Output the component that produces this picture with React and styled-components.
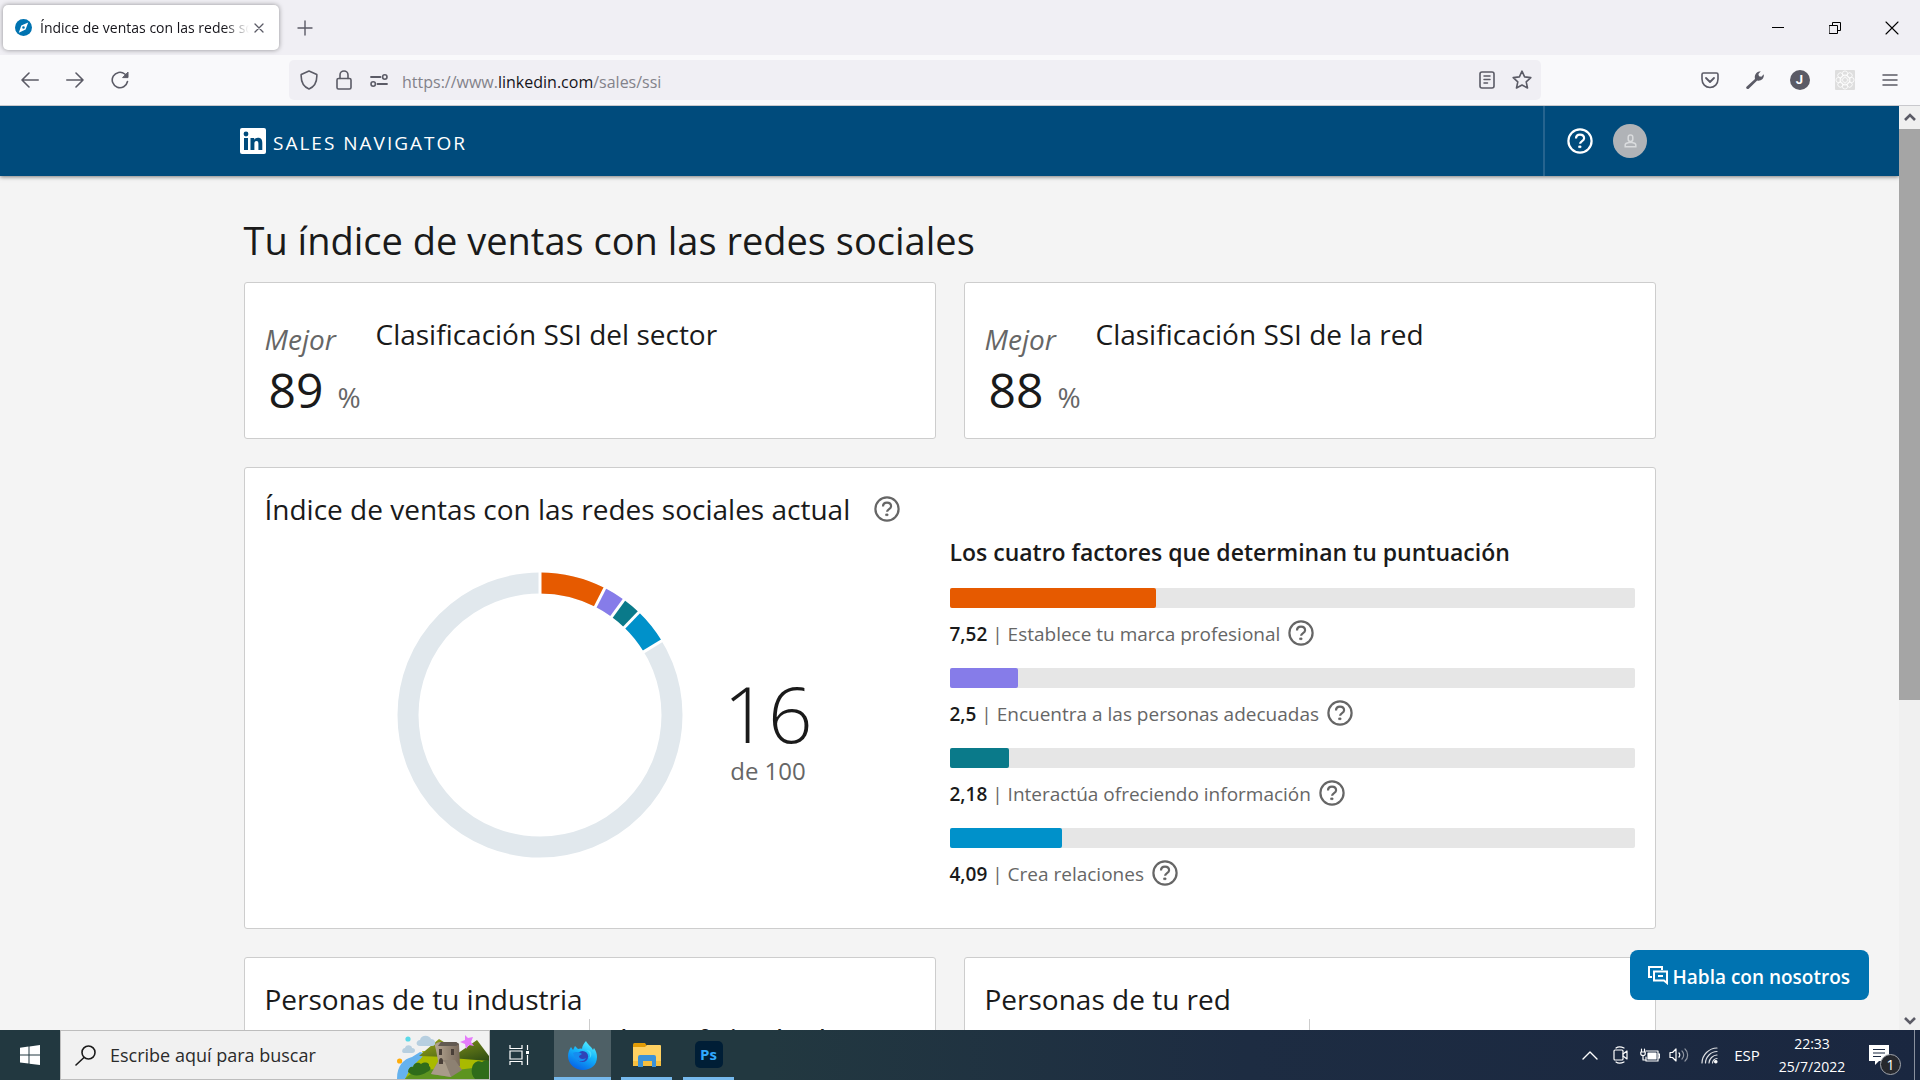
import React from 'react';
import styled, { createGlobalStyle } from 'styled-components';

const GlobalStyle = createGlobalStyle`
  *, *::before, *::after { box-sizing: border-box; }
  body {
    margin: 0;
    background: #f4f4f4;
    color: #1a1a1a;
    font-family: "Segoe UI", "Open Sans", "Noto Sans", sans-serif;
  }
  button { border: 0; padding: 0; margin: 0; background: none; font: inherit; color: inherit; cursor: pointer; }
  h1, h2, p { margin: 0; font-weight: 400; }
  svg { display: block; flex: none; }
`;

const Screen = styled.div`
  display: flex;
  flex-direction: column;
  height: 100vh;
  overflow: hidden;
`;

/* ---------- browser chrome ---------- */
const TabStrip = styled.div`
  display: flex;
  align-items: center;
  height: 55px;
  flex: none;
  padding-left: 3px;
  background: #f0eff4;
`;
const Tab = styled.div`
  display: flex;
  align-items: center;
  gap: 8px;
  width: 276px;
  height: 45px;
  padding: 0 12px;
  border-radius: 5px;
  background: #fff;
  box-shadow: 0 0 5px rgba(0, 0, 0, 0.4);
`;
const TabTitle = styled.span`
  flex: 1;
  overflow: hidden;
  white-space: nowrap;
  font-size: 14px;
  line-height: 24px;
  color: #15141a;
  mask-image: linear-gradient(to right, #000 88%, transparent 100%);
`;
const IconButton = styled.button`
  display: grid;
  place-items: center;
  width: ${(p) => p.$w || 44}px;
  height: ${(p) => p.$h || 40}px;
  flex: none;
  color: ${(p) => p.$color || '#5b5b66'};
`;
const TabClose = styled(IconButton)`
  margin: 0 -2px 0 -8px;
`;
const WindowButtons = styled.div`
  display: flex;
  margin-left: auto;
`;
const Toolbar = styled.div`
  display: flex;
  align-items: center;
  height: 51px;
  flex: none;
  padding: 0 8px;
  background: #f9f9fb;
  border-bottom: 1px solid #c9c9cd;
`;
const UrlBox = styled.div`
  display: flex;
  align-items: center;
  flex: 1;
  max-width: 1252px;
  height: 40px;
  margin-left: 147px;
  padding: 0 2px;
  border-radius: 5px;
  background: #f0eff4;
`;
const UrlText = styled.a`
  flex: 1;
  margin-left: 6px;
  padding-top: 3px;
  font-size: 16px;
  line-height: 24px;
  color: #83828a;
  text-decoration: none;
  b { font-weight: 400; color: #15141a; }
`;
const Extensions = styled.div`
  display: flex;
  margin-left: auto;
`;

/* ---------- page ---------- */
const Viewport = styled.div`
  display: flex;
  flex: 1;
  min-height: 0;
`;
const Page = styled.div`
  position: relative;
  flex: 1;
  overflow: hidden;
  background: #f4f4f4;
`;
const Header = styled.header`
  background: #004b7c;
  box-shadow: 0 1px 4px rgba(0, 0, 0, 0.5);
`;
const HeaderInner = styled.div`
  display: flex;
  justify-content: space-between;
  align-items: center;
  max-width: 1419px;
  height: 70px;
  margin: 0 auto;
`;
const Brand = styled.a`
  display: flex;
  align-items: center;
  gap: 7px;
  color: #fff;
  text-decoration: none;
`;
const BrandName = styled.span`
  padding-top: 4px;
  font-size: 19px;
  line-height: 26px;
  letter-spacing: 2px;
`;
const HeaderTools = styled.div`
  display: flex;
  align-items: center;
  gap: 20px;
  height: 70px;
  padding: 0 12px 0 22px;
  border-left: 2px solid #26648f;
`;
const Avatar = styled.button`
  display: grid;
  place-items: center;
  width: 34px;
  height: 34px;
  border-radius: 50%;
  background: #b0b3b7;
`;
const Main = styled.main`
  width: calc(100% - 32px);
  max-width: 1412px;
  margin: 0 auto;
  padding-top: 40px;
`;
const PageTitle = styled.h1`
  font-size: 38px;
  line-height: 48px;
`;
const Sections = styled.div`
  display: grid;
  gap: 28px;
  margin-top: 18px;
`;
const Pair = styled.div`
  display: grid;
  grid-template-columns: 1fr 1fr;
  gap: 28px;
`;
const Card = styled.section`
  padding: 21px 20px 20px;
  border: 1px solid #cdcdcd;
  border-radius: 3px;
  background: #fff;
`;
const RankCard = styled(Card)`
  display: grid;
  grid-template-columns: 111px 1fr;
  align-items: start;
  padding-top: 31px;
`;
const CardTitle = styled.h2`
  display: flex;
  align-items: center;
  gap: 24px;
  font-size: 28px;
  line-height: 40px;
`;
const Rank = styled.div`
  padding-top: 5px;
`;
const Best = styled.p`
  font-size: 28px;
  line-height: 40px;
  font-style: italic;
  color: #666;
`;
const RankValue = styled.p`
  display: flex;
  align-items: baseline;
  gap: 14px;
  height: 59px;
  padding: 3px 0 0 4px;
  font-size: 48px;
  line-height: 56px;
  white-space: nowrap;
  small { font-size: 28px; line-height: 32px; color: #666; }
`;
const ScoreBody = styled.div`
  display: grid;
  grid-template-columns: 1fr 1fr;
`;
const ScoreChart = styled.div`
  display: flex;
  justify-content: center;
  align-items: flex-end;
  align-self: start;
  gap: 40px;
  padding: 43px 4px 0 0;
`;
const Score = styled.div`
  padding-bottom: 71px;
  text-align: center;
`;
const ScoreNumber = styled.p`
  font-size: 78px;
  line-height: 80px;
  font-weight: 300;
`;
const ScoreTotal = styled.p`
  padding-top: 2px;
  font-size: 24px;
  line-height: 32px;
  color: #666;
`;
const Factors = styled.div`
  padding-top: 7px;
`;
const FactorsTitle = styled.h2`
  margin-bottom: 20px;
  font-size: 23px;
  line-height: 32px;
  font-weight: 600;
`;
const Factor = styled.div`
  margin-bottom: 16px;
`;
const Track = styled.div`
  height: 20px;
  margin-bottom: 8px;
  border-radius: 2px;
  background: #e6e6e6;
`;
const Fill = styled.div`
  height: 20px;
  border-radius: 2px;
  background: ${(p) => p.$color};
`;
const FactorLabel = styled.div`
  display: flex;
  align-items: flex-start;
  gap: 8px;
  font-size: 19px;
  line-height: 36px;
  color: #666;
  b { font-weight: 600; color: #1a1a1a; }
`;
const PeopleBody = styled.div`
  display: grid;
  grid-template-columns: 324px 1fr;
  height: 200px;
`;
const PeopleText = styled.p`
  grid-column: 2;
  padding: 1px 31px 0;
  border-left: 1px solid #cdcdcd;
  font-size: 22px;
  line-height: 32px;
  font-weight: 600;
`;
const TalkButton = styled.button`
  position: absolute;
  right: 30px;
  bottom: 30px;
  display: flex;
  align-items: center;
  gap: 5px;
  height: 50px;
  padding: 0 19px 0 18px;
  border-radius: 8px;
  background: #0073b1;
  color: #fff;
  font-size: 19px;
  line-height: 26px;
  font-weight: 600;
`;
const TalkText = styled.span`
  padding-top: 3px;
`;
const ScrollRail = styled.div`
  display: flex;
  flex-direction: column;
  width: 21px;
  background: #f0f0f0;
`;
const ScrollThumb = styled.div`
  height: 571px;
  margin-bottom: auto;
  background: #a5a5a5;
`;

/* ---------- taskbar ---------- */
const Taskbar = styled.footer`
  display: flex;
  height: 50px;
  flex: none;
  background: linear-gradient(to right, #223840 0, #223840 40%, #1d2c42 65%, #1a2740 100%);
  color: #fff;
`;
const Search = styled.label`
  display: flex;
  align-items: center;
  width: 430px;
  padding-left: 14px;
  border: 1px solid #bdbdbd;
  background: #f1f1f1;
  color: #1a1a1a;
`;
const SearchInput = styled.input`
  flex: 1;
  min-width: 0;
  margin-left: 14px;
  padding: 0;
  border: 0;
  outline: 0;
  background: none;
  font: 400 18px/26px "Segoe UI", "Open Sans", "Noto Sans", sans-serif;
  &::placeholder { color: #2b2b2b; opacity: 1; }
`;
const AppButton = styled.button`
  display: grid;
  place-items: center;
  width: ${(p) => p.$w || 51}px;
  height: 50px;
  margin-left: ${(p) => p.$gap || 0}px;
  background: ${(p) => (p.$active ? '#4e6066' : 'none')};
  box-shadow: ${(p) => (p.$open ? 'inset 0 -3px #76b9ed' : 'none')};
`;
const Tray = styled.div`
  display: flex;
  align-items: center;
  margin-left: auto;
`;
const Lang = styled.span`
  width: 46px;
  text-align: center;
  font-size: 15px;
  line-height: 24px;
`;
const Clock = styled.time`
  width: 84px;
  text-align: center;
  font-size: 14px;
  line-height: 23px;
  white-space: nowrap;
`;
const Notice = styled.button`
  position: relative;
  width: 34px;
  height: 50px;
  margin: 0 11px 0 15px;
`;
const Badge = styled.span`
  position: absolute;
  right: 2px;
  bottom: 5px;
  width: 21px;
  height: 21px;
  border: 1px solid #a0a4ab;
  border-radius: 50%;
  background: #26282e;
  font-size: 14px;
  line-height: 19px;
  text-align: center;
`;
const ShowDesktop = styled.button`
  width: 6px;
  height: 50px;
  border-left: 1px solid #8a919e;
`;

/* ---------- drawings ---------- */
const Line = ({ w = 20, h, vb, sw = 1.6, children }) => (
  <svg width={w} height={h || w} viewBox={vb || `0 0 ${w} ${h || w}`} fill="none" stroke="currentColor"
    strokeWidth={sw} strokeLinecap="round" strokeLinejoin="round">{children}</svg>
);

const Help = ({ color = '#666', label }) => (
  <IconButton type="button" $w={26} $h={34} $color={color} aria-label={label}>
    <Line w={26} sw={2.2}>
      <circle cx="13" cy="13" r="11.6" />
      <path d="M9 10.6c0-2.5 1.6-4 4-4s4.1 1.5 4.1 3.6c0 2.9-4 2.8-4 5.6" strokeLinecap="butt" />
      <rect x="12" y="18" width="2" height="1.6" fill="currentColor" strokeWidth="0.8" />
    </Line>
  </IconButton>
);

const Compass = () => (
  <svg width="17" height="17" viewBox="0 0 17 17">
    <circle cx="8.500" cy="8.500" r="8.500" fill="#0073b1" />
    <path fillRule="evenodd" fill="#fff" d="M13.200 3.400 10.600 10.400 3.800 13.700 6.300 6.600ZM8.500 7.200a1.300 1.300 0 1 0 0 2.600 1.300 1.300 0 0 0 0-2.600Z" />
  </svg>
);

const LinkedIn = () => (
  <svg width="26" height="26" viewBox="0 0 26 26">
    <rect width="26" height="26" rx="2" fill="#fff" />
    <circle cx="6" cy="6" r="2.400" fill="#004b7c" />
    <path fill="#004b7c" d="M4 10h4v12H4zM10.500 10h3.700v1.700c.7-1.200 2-2 3.700-2 3.500 0 4.400 2.200 4.400 5.400V22h-3.900v-6.200c0-1.600-.3-2.900-1.900-2.900-1.700 0-2.100 1.300-2.100 2.900V22h-3.900z" />
  </svg>
);

const factors = [
  { value: 7.52, text: 'Establece tu marca profesional', color: '#e65a00' },
  { value: 2.5, text: 'Encuentra a las personas adecuadas', color: '#867ce9' },
  { value: 2.18, text: 'Interactúa ofreciendo información', color: '#0a7a8a' },
  { value: 4.09, text: 'Crea relaciones', color: '#0091ca' },
];

const Donut = () => {
  const r = 132;
  let at = 0;
  const arcs = factors.map((f) => {
    const start = at;
    at += f.value;
    return { ...f, start };
  });
  return (
    <svg width="286" height="286" viewBox="-143 -143 286 286" role="img" aria-label="16 de 100">
      <g transform="rotate(-90)" fill="none" strokeWidth="21">
        <circle r={r} stroke="#e1e8ed" />
        {arcs.map((a) => (
          <circle key={a.text} r={r} stroke={a.color} pathLength="100"
            strokeDasharray={`${a.value} ${100 - a.value}`} strokeDashoffset={-a.start} />
        ))}
        {[...arcs.map((a) => a.start), at].map((v) => (
          <line key={v} x1="118" x2="145" y1="0" y2="0" stroke="#fff" strokeWidth="3" transform={`rotate(${v * 3.6})`} />
        ))}
      </g>
    </svg>
  );
};

const Castle = () => (
  <svg width="92" height="48" viewBox="0 0 92 48">
    <defs>
      <linearGradient id="hill" x1="0" y1="0" x2="1" y2="1">
        <stop offset="0" stopColor="#9aa61a" /><stop offset="1" stopColor="#2c4a14" />
      </linearGradient>
      <linearGradient id="stone" x1="0" x2="1">
        <stop offset="0" stopColor="#b5a692" /><stop offset="1" stopColor="#77685a" />
      </linearGradient>
    </defs>
    <path d="M0 48c0-14 7-20 15-22l8-5 30 8-10 19z" fill="#65b2ee" />
    <path d="M22 29c4-3 5-6 3-9l35 2 32 4v22H8c4-8 8-14 14-19z" fill="#a9ba00" />
    <path d="M22 25 42 8l8 5v13zM54 27 80 9l12 16v5z" fill="url(#hill)" />
    <path d="M8 48c8-9 20-11 36-9 18 2 30-4 48-2v11z" fill="#5d9420" />
    <path d="M11 41c0-4 3-6 5-5 1-5 6-5 8-3 4-3 9-1 8 2 3 2 1 5-2 6-6 4-14 5-19 0zM75 37c1-6 6-8 10-6 3-2 6-2 7-1v18H78c-3-3-4-7-3-11z" fill="#2f6c1a" />
    <path d="M38 15c0-3 3-4 6-4l15 0 3 2 1 22H42l-3-16z" fill="url(#stone)" />
    <path d="M41 15h18l3-2-3-2H44z" fill="#625a52" />
    <path d="M34 43 42 29h16l7 10-11 7z" fill="#8d8172" />
    <path d="M34 43 42 29l6 2 6 15z" fill="#a89b89" />
    <path d="M42 18h3v6h-3zM54 18h3v6h-3zM42 30c0-4 4-4 4 0v3h-4z" fill="#493f38" />
    <path d="M10 22c-3 0-2-5 1-5 1-4 7-3 7 0 4 0 4 5 0 5zM26 15c-5 0-4-6 0-6 1-6 10-5 11-1 5 0 6 7 1 7z" fill="#b7cfe0" transform="translate(-3)" />
    <circle cx="11" cy="8" r="2.600" fill="#5bd9e8" />
    <circle cx="2.600" cy="30" r="2.600" fill="#ffac0a" />
    <path d="m68 4 3 3 5-1-2 5 3 4-5-1-3 4-1-5-5-2 5-2z" fill="#e57cfa" />
  </svg>
);

const Firefox = () => (
  <svg width="29" height="29" viewBox="0 0 29 29">
    <defs>
      <linearGradient id="fx" x1=".8" y1="0" x2=".3" y2="1">
        <stop offset="0" stopColor="#5df4ff" /><stop offset=".45" stopColor="#14b5fa" /><stop offset="1" stopColor="#0560e6" />
      </linearGradient>
    </defs>
    <path d="M3 6 5 9 7 5l3 3c1 0 3-1 4 0 0-3 2-6 4-8 1 3 5 5 7 9l1-2c2 3 3 6 3 9 0 8-6 13-14 13S0 23 0 15c0-3 1-6 3-9z" fill="url(#fx)" />
    <circle cx="14.500" cy="15.500" r="5.600" fill="#2f43b8" />
    <path d="M5 12c3-2 7-1 9 1l-3 2c0 3 4 4 7 2-2 5-10 5-13-5z" fill="#168cf0" />
    <path d="M18 9c4 2 5 6 3 9 4-4 3-9-3-9z" fill="#48d8ff" />
  </svg>
);

const Folder = () => (
  <svg width="28" height="24" viewBox="0 0 28 24">
    <path d="M0 1.500Q0 0 1.500 0H12l2 3-2 3H0z" fill="#e39c06" />
    <path d="M0 4h12l2-2h13q1 0 1 1v20H0z" fill="#ffd162" />
    <path d="M0 18h28v5H0z" fill="#f7bf3f" />
    <path d="M5 24V14q0-2 2-2h14q2 0 2 2v10h-4v-6h-9v6z" fill="#3c92d8" />
  </svg>
);

const Photoshop = styled.span`
  display: grid;
  place-items: center;
  width: 28px;
  height: 27px;
  margin-bottom: 2px;
  border-radius: 5px;
  background: #001e36;
  color: #31a8ff;
  font-size: 15px;
  line-height: 20px;
  font-weight: 700;
`;

const ExtBadge = styled.span`
  display: grid;
  place-items: center;
  width: 20px;
  height: 20px;
  border-radius: 50%;
  background: #5b5b66;
  color: #fff;
  font-family: Roboto, sans-serif;
  font-size: 13px;
  line-height: 18px;
  font-weight: 700;
`;

const RankSection = ({ title, value }) => (
  <RankCard>
    <Rank>
      <Best>Mejor</Best>
      <RankValue>{value}<small>%</small></RankValue>
    </Rank>
    <CardTitle>{title}</CardTitle>
  </RankCard>
);

export default function App() {
  return (
    <Screen>
      <GlobalStyle />
      <TabStrip>
        <Tab>
          <Compass />
          <TabTitle>Índice de ventas con las redes sociales</TabTitle>
          <TabClose type="button" $w={20} $h={24} aria-label="Cerrar pestaña">
            <Line w={10} sw={1.3}><path d="M1 1l8 8M9 1L1 9" /></Line>
          </TabClose>
        </Tab>
        <IconButton type="button" $w={51} aria-label="Nueva pestaña">
          <Line w={16} sw={1.4}><path d="M8 1v14M1 8h14" /></Line>
        </IconButton>
        <WindowButtons>
          <IconButton type="button" $w={57} $color="#000" aria-label="Minimizar"><Line w={12} sw={1}><path d="M0 5.500h12" /></Line></IconButton>
          <IconButton type="button" $w={57} $color="#000" aria-label="Restaurar">
            <Line w={12} sw={1}><path d="M.5 3.500h8v8h-8zM3.500 3.500v-3h8v8h-3" strokeLinejoin="miter" /></Line>
          </IconButton>
          <IconButton type="button" $w={57} $color="#000" aria-label="Cerrar"><Line w={14} sw={1.1}><path d="M1 1l12 12M13 1L1 13" /></Line></IconButton>
        </WindowButtons>
      </TabStrip>
      <Toolbar>
        <IconButton type="button" aria-label="Atrás"><Line w={18}><path d="M17.200 9H1M8 2L1 9l7 7" /></Line></IconButton>
        <IconButton type="button" $w={46} aria-label="Adelante"><Line w={18}><path d="M.8 9H17M10 2l7 7-7 7" /></Line></IconButton>
        <IconButton type="button" aria-label="Recargar">
          <Line w={18}><path d="M16.500 10.500A7.700 7.700 0 1 1 13.800 3l2 2" /><path d="M17 1.500V6.600h-5z" fill="currentColor" strokeWidth="1" /></Line>
        </IconButton>
        <UrlBox>
          <IconButton type="button" $w={35} aria-label="Protección"><Line w={18} h={20}><path d="M9 1l7.800 3.500c.4 7-2 12-7.800 14.500C3.200 16.500.8 11.500 1.200 4.500z" /></Line></IconButton>
          <IconButton type="button" $w={35} aria-label="Sitio seguro"><Line w={16} h={20}><rect x="1" y="8.500" width="14" height="10.500" rx="1.500" /><path d="M4 8.500V5a4 4 0 0 1 8 0v3.500" /></Line></IconButton>
          <IconButton type="button" $w={35} aria-label="Permisos">
            <Line w={18} h={13}><circle cx="14.800" cy="3" r="2.200" /><circle cx="3.200" cy="10" r="2.200" /><path d="M1 3h9.500M7.500 10H17" strokeWidth="1.800" /></Line>
          </IconButton>
          <UrlText href="#ssi">https://www.<b>linkedin.com</b>/sales/ssi</UrlText>
          <IconButton type="button" $w={35} aria-label="Vista de lectura">
            <Line w={16} h={18}><rect x="1" y="1" width="14" height="16" rx="2" /><path d="M5 5h6M5 8.500h6M5 12h3.500" strokeWidth="1.500" /></Line>
          </IconButton>
          <IconButton type="button" $w={35} aria-label="Marcar página">
            <Line w={20}><path d="M10 1.200l2.600 5.700 6.200.7-4.600 4.200 1.300 6.200L10 15l-5.500 3 1.300-6.200L1.200 7.600l6.200-.7z" /></Line>
          </IconButton>
        </UrlBox>
        <Extensions>
          <IconButton type="button" $w={45} aria-label="Pocket">
            <Line w={18} h={17}><path d="M2.500 1h13Q17 1 17 2.500V7c0 5-3.500 8.500-8 8.500S1 12 1 7V2.500Q1 1 2.500 1z" /><path d="M5 6l4 4 4-4" strokeWidth="1.800" /></Line>
          </IconButton>
          <IconButton type="button" $w={45} aria-label="Herramientas">
            <svg width="18" height="18" viewBox="0 0 18 18" fill="currentColor"><path d="M.5 15.700 9 7.900C8 4 10.600.3 14.800.2L12.400 3l.6 2.300 2.400.5 2.300-2.500c.9 4.200-2.900 7.300-6.500 6.200l-8.500 8.200C1.400 18.800-.7 17 .5 15.700z" /></svg>
          </IconButton>
          <IconButton type="button" $w={45} aria-label="Cuenta J"><ExtBadge>J</ExtBadge></IconButton>
          <IconButton type="button" $w={45} aria-label="Extensión">
            <svg width="20" height="20" viewBox="0 0 20 20" fill="none" stroke="#fff" strokeWidth="0.8">
              <rect width="20" height="20" rx="1" fill="#dedede" stroke="none" />
              <circle cx="10" cy="10" r="2.500" /><circle cx="10" cy="10" r="5" />
              {[0, 45, 90, 135, 180, 225, 270, 315].map((a) => <circle key={a} cx="10" cy="3.500" r="2.600" transform={`rotate(${a} 10 10)`} />)}
            </svg>
          </IconButton>
          <IconButton type="button" $w={45} aria-label="Menú"><Line w={16} h={12} sw={1.5}><path d="M1 1h14M1 6h14M1 11h14" /></Line></IconButton>
        </Extensions>
      </Toolbar>

      <Viewport>
        <Page>
          <Header>
            <HeaderInner>
              <Brand href="#inicio"><LinkedIn /><BrandName>SALES NAVIGATOR</BrandName></Brand>
              <HeaderTools>
                <Help color="#fff" label="Ayuda" />
                <Avatar type="button" aria-label="Perfil">
                  <svg width="13" height="14" viewBox="0 0 13 14" fill="none" stroke="#dadcde" strokeWidth="1.500">
                    <rect x="4.200" y="1" width="4.600" height="6.500" rx="2.200" /><path d="M1.200 12.700v-2c0-1.200 2-1.900 3.800-2.200h3c1.800.3 3.800 1 3.800 2.200v2z" />
                  </svg>
                </Avatar>
              </HeaderTools>
            </HeaderInner>
          </Header>
          <Main>
            <PageTitle>Tu índice de ventas con las redes sociales</PageTitle>
            <Sections>
              <Pair>
                <RankSection title="Clasificación SSI del sector" value="89" />
                <RankSection title="Clasificación SSI de la red" value="88" />
              </Pair>
              <Card>
                <CardTitle>Índice de ventas con las redes sociales actual <Help label="Información sobre el índice" /></CardTitle>
                <ScoreBody>
                  <ScoreChart>
                    <Donut />
                    <Score>
                      <ScoreNumber>16</ScoreNumber>
                      <ScoreTotal>de 100</ScoreTotal>
                    </Score>
                  </ScoreChart>
                  <Factors>
                    <FactorsTitle>Los cuatro factores que determinan tu puntuación</FactorsTitle>
                    {factors.map((f) => (
                      <Factor key={f.text}>
                        <Track><Fill $color={f.color} style={{ width: `${(f.value / 25) * 100}%` }} /></Track>
                        <FactorLabel>
                          <span><b>{String(f.value).replace('.', ',')}</b> | {f.text}</span>
                          <Help label={`Información: ${f.text}`} />
                        </FactorLabel>
                      </Factor>
                    ))}
                  </Factors>
                </ScoreBody>
              </Card>
              <Pair>
                <Card>
                  <CardTitle>Personas de tu industria</CardTitle>
                  <PeopleBody><PeopleText>Los profesionales de</PeopleText></PeopleBody>
                </Card>
                <Card>
                  <CardTitle>Personas de tu red</CardTitle>
                  <PeopleBody><PeopleText /></PeopleBody>
                </Card>
              </Pair>
            </Sections>
          </Main>
          <TalkButton type="button">
            <Line w={20} h={19} sw={2}>
              <path d="M4 11H1V1h13v3" strokeLinejoin="miter" strokeLinecap="butt" />
              <path d="M6 5.500h13V17l-3-2.500H6z" strokeLinejoin="miter" /><path d="M10 10h5" strokeLinecap="butt" />
            </Line>
            <TalkText>Habla con nosotros</TalkText>
          </TalkButton>
        </Page>
        <ScrollRail>
          <IconButton type="button" $w={21} $h={23} aria-label="Subir"><Line w={12} h={9} sw={2.6}><path d="M1 7l5-5 5 5" strokeLinecap="butt" strokeLinejoin="miter" /></Line></IconButton>
          <ScrollThumb />
          <IconButton type="button" $w={21} $h={20} aria-label="Bajar"><Line w={12} h={9} sw={2.6}><path d="M1 2l5 5 5-5" strokeLinecap="butt" strokeLinejoin="miter" /></Line></IconButton>
        </ScrollRail>
      </Viewport>

      <Taskbar>
        <AppButton type="button" $w={60} aria-label="Inicio">
          <svg width="20" height="20" viewBox="0 0 20 20" fill="#fff"><path d="M0 2.700 8.500 1.600v8H0zM9.500 1.400 20 0v9.600H9.500zM0 10.600h8.500v8L0 17.400zM9.500 10.600H20V20L9.500 18.700z" /></svg>
        </AppButton>
        <Search>
          <Line w={21} h={21} sw={1.6}><circle cx="13.500" cy="7.500" r="6.500" /><path d="M9 12.500L1 20" /></Line>
          <SearchInput type="text" aria-label="Buscar" placeholder="Escribe aquí para buscar" />
          <Castle />
        </Search>
        <AppButton type="button" $w={59} aria-label="Vista de tareas">
          <svg width="21" height="20" viewBox="0 0 21 20" fill="none" stroke="#fff" strokeWidth="1.200">
            <path d="M1 0v3.500h12V0M1 20v-3.500h12V20M1 6h12v8H1zM18.500 0v5M18.500 10v10" /><path d="M17 6h3v3h-3z" fill="#fff" stroke="none" />
          </svg>
        </AppButton>
        <AppButton type="button" $gap={5} $w={57} $active $open aria-label="Firefox"><Firefox /></AppButton>
        <AppButton type="button" $gap={10} $open aria-label="Explorador de archivos"><Folder /></AppButton>
        <AppButton type="button" $gap={11} $open aria-label="Photoshop"><Photoshop>Ps</Photoshop></AppButton>
        <Tray>
          <IconButton type="button" $w={32} $color="#fff" aria-label="Iconos ocultos"><Line w={16} h={10} sw={1.4}><path d="M1 9l7-7 7 7" /></Line></IconButton>
          <IconButton type="button" $w={29} $color="#fff" aria-label="Cámara">
            <Line w={16} h={18} sw={1.2}><rect x="1" y="4" width="9" height="10" rx="1" /><path d="M10 8l4-3v8l-4-3M3 2c2-1.500 5-1.500 8 0M3 16c2 1.500 5 1.500 8 0" /></Line>
          </IconButton>
          <IconButton type="button" $w={29} $color="#fff" aria-label="Batería">
            <Line w={20} h={14} sw={1.2}><path d="M6 3h12v10H6V9M18 6h1.500v4H18M1.500 1v3M4.500 1v3M.8 4h4.400v2c0 2-4.400 2-4.400 0zM3 7.500V12h3" /><path d="M8 5h8v6H8z" fill="currentColor" /></Line>
          </IconButton>
          <IconButton type="button" $w={30} $color="#fff" aria-label="Volumen">
            <Line w={20} h={16} sw={1.2}><path d="M1 5.500h2.500L7 2v12l-3.500-3.500H1zM10 6c1 1 1 3 0 4" /><path d="M13 4c2.200 2 2.200 6 0 8M16 2c3.500 3 3.500 9 0 12" opacity=".5" /></Line>
          </IconButton>
          <IconButton type="button" $w={30} $color="#fff" aria-label="Wi-Fi">
            <Line w={17} h={17} sw={1.2}><path d="M1 16C1 8 8 1 16 1M4.500 16C4.500 10 10 4.500 16 4.500M8 16c0-4 4-8 8-8M11.500 16c0-2 2-4.500 4.500-4.500" opacity=".85" /><circle cx="14.800" cy="14.800" r="1.200" fill="currentColor" /></Line>
          </IconButton>
          <Lang>ESP</Lang>
          <Clock dateTime="2022-07-25T22:33">22:33<br />25/7/2022</Clock>
          <Notice type="button" aria-label="Notificaciones: 1">
            <svg width="20" height="20" viewBox="0 0 20 20"><path d="M0 0h20v16H10l-4 4v-4H0z" fill="#fff" /><path d="M4 4.500h12M4 8h12M4 11.500h8" stroke="#1b2941" strokeWidth="1.200" /></svg>
            <Badge>1</Badge>
          </Notice>
          <ShowDesktop type="button" aria-label="Mostrar escritorio" />
        </Tray>
      </Taskbar>
    </Screen>
  );
}
